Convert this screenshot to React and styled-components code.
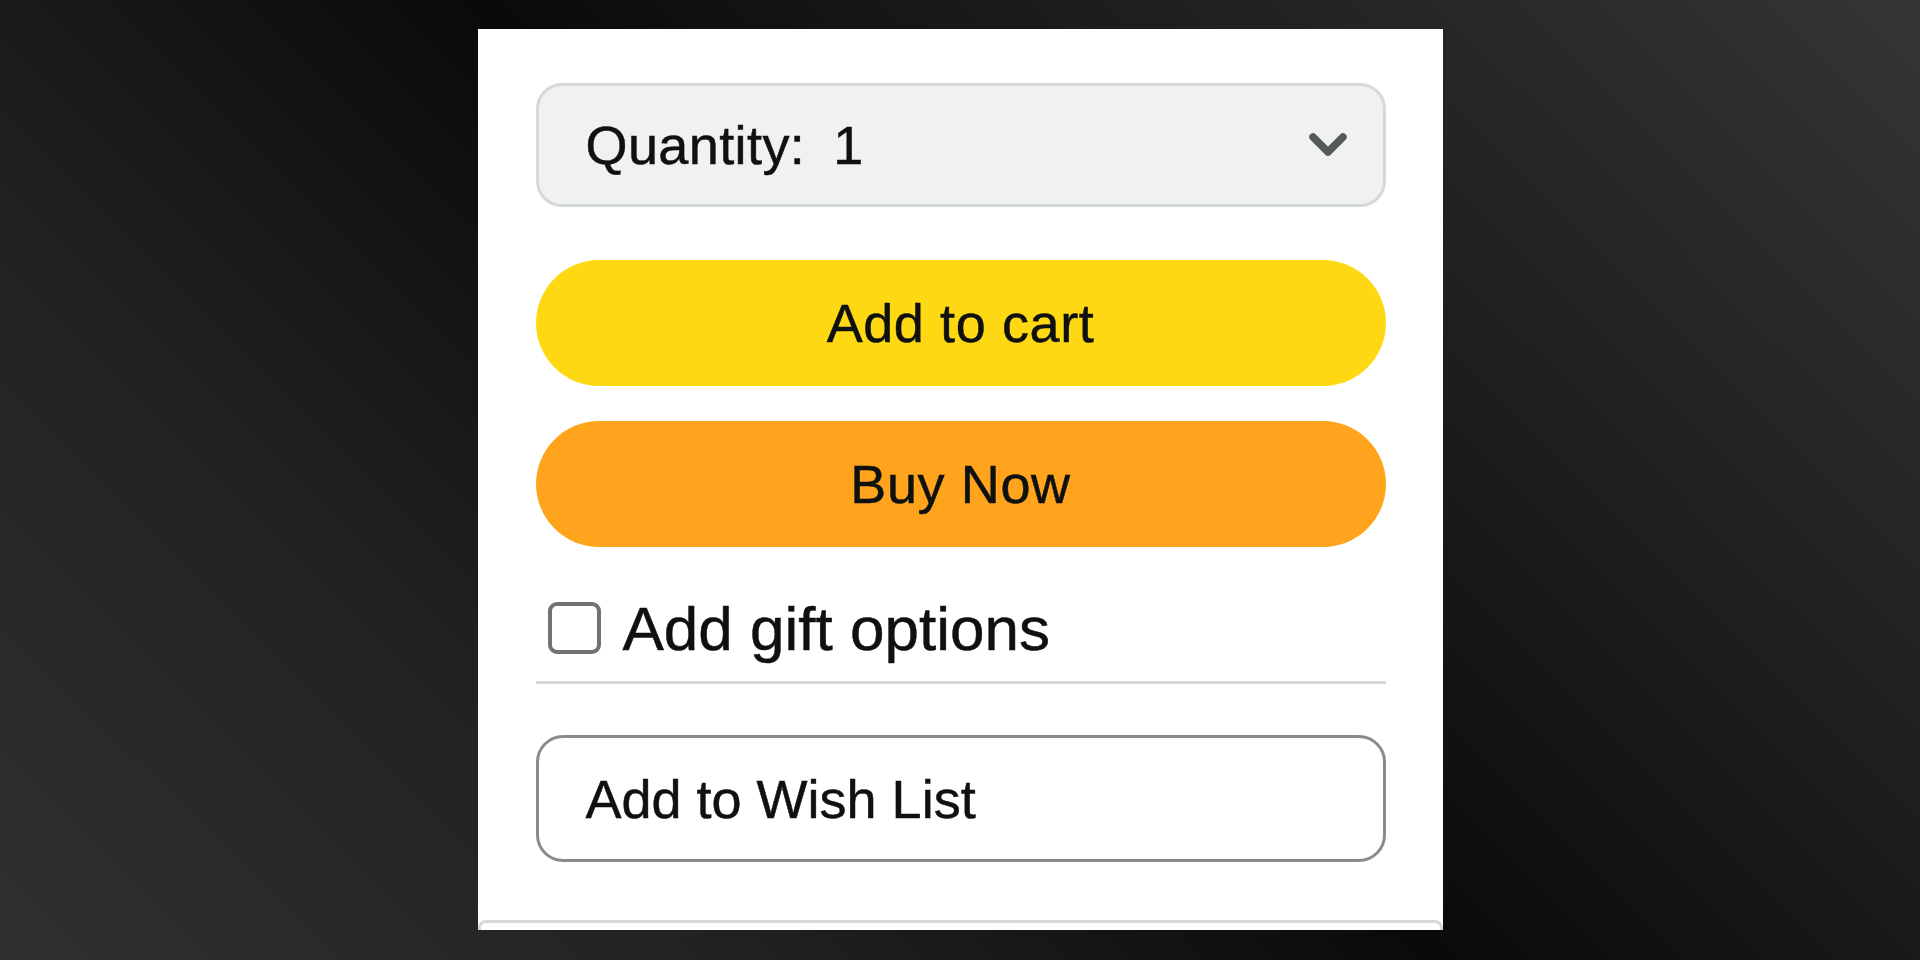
import React, { useState } from 'react';
import styled, { createGlobalStyle } from 'styled-components';

const GlobalStyle = createGlobalStyle`
  html, body {
    margin: 0;
    padding: 0;
  }
  body {
    width: 1920px;
    height: 960px;
    overflow: hidden;
    font-family: "Liberation Sans", Arial, sans-serif;
    background: linear-gradient(45deg, #303030 0%, #222 25%, #0a0a0a 50%, #1e1e1e 72%, #353535 100%);
  }
`;

const Page = styled.div`
  width: 1920px;
  height: 960px;
  display: flex;
  justify-content: center;
  align-items: flex-start;
`;

const Card = styled.div`
  width: 965px;
  margin-top: 29px;
  background: #ffffff;
  display: flex;
  flex-direction: column;
  overflow: hidden;
`;

const Body = styled.div`
  display: flex;
  flex-direction: column;
  padding: 54px 57px 58px 58px;
  -webkit-text-stroke: 0.5px #0f1111;
`;

const Select = styled.div`
  box-sizing: border-box;
  height: 124px;
  border: 3px solid #d5d9d9;
  border-radius: 26px;
  background: #f0f2f2;
  display: flex;
  align-items: center;
  justify-content: space-between;
  padding: 0 35px 0 47px;
  color: #0f1111;
  font-size: 54px;
  cursor: pointer;
`;

const SelectText = styled.div`
  display: flex;
  gap: 28px;
  letter-spacing: 0.4px;
`;

const Pill = styled.button`
  box-sizing: border-box;
  height: 126px;
  margin-top: ${p => p.top}px;
  border: none;
  border-radius: 63px;
  background: ${p => p.bg};
  color: #0f1111;
  font-family: inherit;
  font-size: 54px;
  letter-spacing: 0.6px;
  cursor: pointer;
  display: flex;
  align-items: center;
  justify-content: center;
  -webkit-text-stroke: inherit;
`;

const GiftRow = styled.label`
  margin-top: 55px;
  height: 52px;
  display: flex;
  align-items: center;
  padding-left: 12px;
  gap: 22px;
  color: #0f1111;
  font-size: 62px;
  cursor: pointer;
`;

const Box = styled.span`
  box-sizing: border-box;
  width: 53px;
  height: 52px;
  border: 4px solid #6f7373;
  border-radius: 9px;
  background: ${p => (p.checked ? '#2162a1' : '#fff')};
  flex-shrink: 0;
`;

const Divider = styled.div`
  margin-top: 27px;
  height: 3px;
  background: #d5d9d9;
`;

const WishButton = styled.button`
  box-sizing: border-box;
  margin-top: 51px;
  height: 127px;
  border: 3px solid #888c8c;
  border-radius: 27px;
  background: #fff;
  color: #0f1111;
  font-family: inherit;
  font-size: 54px;
  text-align: left;
  padding: 0 0 0 47px;
  cursor: pointer;
  -webkit-text-stroke: inherit;
`;

const NextBox = styled.div`
  box-sizing: border-box;
  height: 10px;
  border: 3px solid #d5d9d9;
  border-bottom: none;
  border-radius: 8px 8px 0 0;
`;

const Chevron = () => (
  <svg width="40" height="26" viewBox="0 0 40 26">
    <path d="M5 5 L20 20 L35 5" fill="none" stroke="#565959" strokeWidth="7.5" strokeLinecap="round" strokeLinejoin="round" />
  </svg>
);

const App = () => {
  const [gift, setGift] = useState(false);

  return (
    <Page>
      <GlobalStyle />
      <Card>
        <Body>
          <Select>
            <SelectText>
              <span>Quantity:</span>
              <span>1</span>
            </SelectText>
            <Chevron />
          </Select>
          <Pill top={53} bg="#ffd814">Add to cart</Pill>
          <Pill top={35} bg="#ffa41c">Buy Now</Pill>
          <GiftRow onClick={() => setGift(!gift)}>
            <Box checked={gift} />
            <span>Add gift options</span>
          </GiftRow>
          <Divider />
          <WishButton>Add to Wish List</WishButton>
        </Body>
        <NextBox />
      </Card>
    </Page>
  );
};

export default App;
